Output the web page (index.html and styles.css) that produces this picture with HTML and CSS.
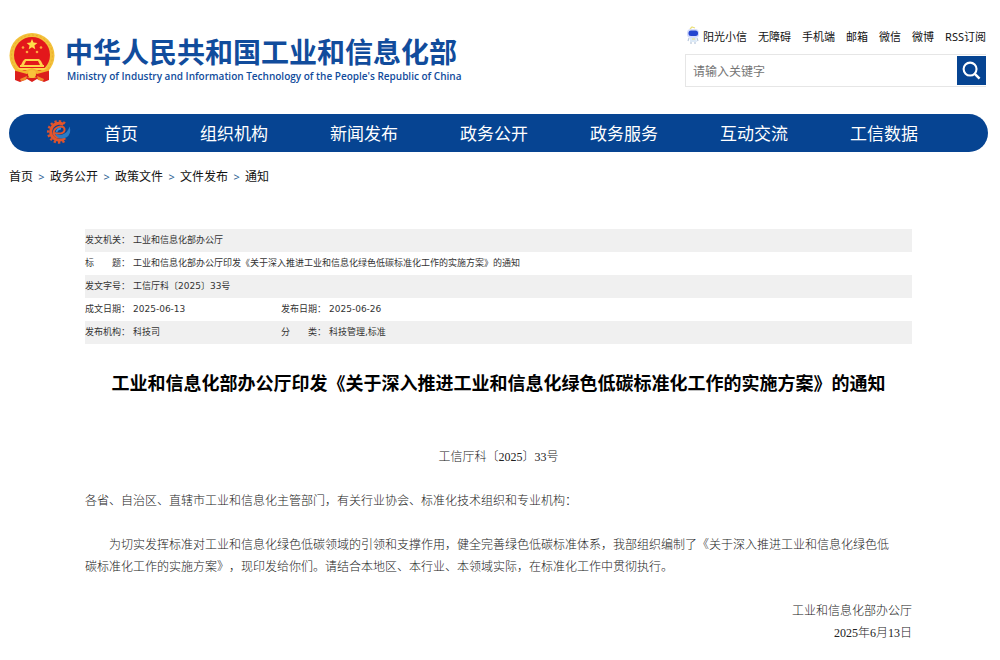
FILE: index.html
```html
<!DOCTYPE html>
<html lang="zh-CN">
<head>
<meta charset="utf-8">
<title>工业和信息化部办公厅通知</title>
<meta name="viewport" content="width=device-width, initial-scale=1">
<link rel="stylesheet" href="styles.css">
</head>
<body>
<header class="header">
  <a class="brand" href="#">
    <svg class="emblem" viewBox="0 0 46 50" aria-hidden="true">
      <path d="M6 34L40 34L40 47L35 49L28 46L23 49L18 46L11 49L6 47Z" fill="#dc1f1c"/>
      <circle cx="23" cy="22.500" r="22.500" fill="#f3c13a"/>
      <circle cx="23" cy="22.500" r="20.500" fill="none" stroke="#eba92c" stroke-width="1" stroke-dasharray="2 2"/>
      <circle cx="23" cy="22" r="18" fill="#e3171b"/>
      <path d="M23 6l1.500 3.600 3.900.3-3 2.500.9 3.800-3.300-2-3.300 2 .9-3.800-3-2.500 3.900-.3z" fill="#ffdf4a"/>
      <g fill="#ffa53e"><circle cx="14" cy="14.500" r="1.300"/><circle cx="32" cy="14.500" r="1.300"/><circle cx="18" cy="19" r="1.300"/><circle cx="28" cy="19" r="1.300"/></g>
      <path d="M16 26h14l2 2H14zM14 28h3l-2 4h-3zM29 28h3l2 4h-3zM11 32h24v2H11zM8 35h30l-3 2H11z" fill="#ffd34a"/>
      <path d="M4 33q8 6 14 4l5-2 5 2q6 2 14-4l-4 7-9 2-6-3-6 3-9-2z" fill="#f5b62c"/>
      <path d="M7 38l11 3 5-3 5 3 11-3v5l-10 2-6-2-6 2-10-2z" fill="#dc1f1c"/>
      <circle cx="23" cy="41" r="4" fill="#f9c33b"/>
      <path d="M11 46l7-3-1 4-5 1zM35 46l-7-3 1 4 5 1z" fill="#ef8a2a"/>
    </svg>
    <span class="brand-text">
      <span class="brand-cn">中华人民共和国工业和信息化部</span>
      <span class="brand-en" lang="en">Ministry of Industry and Information Technology of the People's Republic of China</span>
    </span>
  </a>
  <div class="tools">
    <nav class="quick" aria-label="快捷链接">
      <a class="robot-link" href="#">
        <svg class="robot" viewBox="0 0 14 20" aria-hidden="true">
          <path d="M4 3l2-2 3 1" fill="none" stroke="#eadf7c" stroke-width="1.200"/>
          <rect x="1" y="3" width="12" height="9" rx="4" fill="#d5dcfb"/>
          <rect x="2.500" y="4.500" width="9.500" height="5.500" rx="2.500" fill="#2344cf"/>
          <path d="M4 12h6l1 4H4z" fill="#dce9f6"/>
          <path d="M3 12l-1 3M11 12l1 3M5 16v2M9 16v2" stroke="#b9c8dc" stroke-width="1.200"/>
          <path d="M6 13h3" stroke="#eadf7c"/>
        </svg>阳光小信</a>
      <a href="#">无障碍</a>
      <a href="#">手机端</a>
      <a href="#">邮箱</a>
      <a href="#">微信</a>
      <a href="#">微博</a>
      <a href="#">RSS订阅</a>
    </nav>
    <form class="search">
      <input class="search-input" type="text" placeholder="请输入关键字" aria-label="请输入关键字">
      <button class="search-button" type="button" aria-label="搜索">
        <svg class="search-icon" viewBox="0 0 20 20" aria-hidden="true"><circle cx="8.500" cy="8.500" r="6.800" fill="none" stroke="#fff" stroke-width="2.200"/><path d="M13.500 13.500L18.500 18.500" stroke="#fff" stroke-width="2.600"/></svg>
      </button>
    </form>
  </div>
</header>

<nav class="main-nav" aria-label="主导航">
  <svg class="gear" viewBox="0 0 26 26" aria-hidden="true">
    <path d="M19 4.500A10.500 10.500 0 1 0 20 20.500" fill="none" stroke="#d9532f" stroke-width="2.600" stroke-dasharray="2.300 2"/>
    <path d="M17.500 5.500A8.500 8.500 0 1 0 19 19" fill="none" stroke="#e4552b" stroke-width="3"/>
    <path d="M8.500 14Q17 16 18.500 11.500Q19 7.500 14.500 7.500Q8 8.500 7.500 14Q9 20 17 18" fill="none" stroke="#e4552b" stroke-width="2"/>
    <path d="M10.500 14.500Q12 17 16.500 15.500Q22 13.500 23.500 7.500Q26.500 17 17 19.500Q10.500 19.500 9.500 15Z" fill="#2c7cc6"/>
    <path d="M10.500 13Q11.500 9.500 15 9.500" fill="none" stroke="#3a8bd4" stroke-width="1.800"/>
  </svg>
  <a href="#">首页</a>
  <a href="#">组织机构</a>
  <a href="#">新闻发布</a>
  <a href="#">政务公开</a>
  <a href="#">政务服务</a>
  <a href="#">互动交流</a>
  <a href="#">工信数据</a>
</nav>

<nav class="crumbs" aria-label="面包屑">
  <a href="#">首页</a><span class="sep">&gt;</span><a href="#">政务公开</a><span class="sep">&gt;</span><a href="#">政策文件</a><span class="sep">&gt;</span><a href="#">文件发布</a><span class="sep">&gt;</span><a href="#">通知</a>
</nav>

<main class="content">
  <table class="meta">
    <tr><th scope="row">发文机关：</th><td colspan="3">工业和信息化部办公厅</td></tr>
    <tr><th scope="row">标　　题：</th><td colspan="3">工业和信息化部办公厅印发《关于深入推进工业和信息化绿色低碳标准化工作的实施方案》的通知</td></tr>
    <tr><th scope="row">发文字号：</th><td colspan="3">工信厅科〔2025〕33号</td></tr>
    <tr><th scope="row">成文日期：</th><td class="first-value">2025-06-13</td><th scope="row">发布日期：</th><td>2025-06-26</td></tr>
    <tr><th scope="row">发布机构：</th><td class="first-value">科技司</td><th scope="row">分　　类：</th><td>科技管理,标准</td></tr>
  </table>
  <h1 class="title">工业和信息化部办公厅印发《关于深入推进工业和信息化绿色低碳标准化工作的实施方案》的通知</h1>
  <article class="article">
    <p class="number">工信厅科〔2025〕33号</p>
    <p>各省、自治区、直辖市工业和信息化主管部门，有关行业协会、标准化技术组织和专业机构：</p>
    <p class="indent">为切实发挥标准对工业和信息化绿色低碳领域的引领和支撑作用，健全完善绿色低碳标准体系，我部组织编制了《关于深入推进工业和信息化绿色低碳标准化工作的实施方案》，现印发给你们。请结合本地区、本行业、本领域实际，在标准化工作中贯彻执行。</p>
    <p class="sign">工业和信息化部办公厅<br>2025年6月13日</p>
  </article>
</main>
</body>
</html>
```

FILE: styles.css
```css
* {
  box-sizing: border-box;
}

body {
  margin: 0;
  padding: 26px 12px 16px 9px;
  background: #fff;
  color: #111;
  font-family: "Noto Sans", "Noto Sans CJK SC", sans-serif;
  font-size: 12px;
  text-spacing-trim: space-all;
}

a {
  color: inherit;
  text-decoration: none;
}

.header {
  display: flex;
  justify-content: space-between;
  align-items: flex-start;
}

.brand {
  display: flex;
  align-items: flex-start;
  gap: 10px;
  padding-top: 7px;
  color: #114c9c;
}

.emblem {
  width: 46px;
  height: 50px;
}

.brand-text {
  display: flex;
  flex-direction: column;
}

.brand-cn {
  font-family: "Noto Sans CJK SC", sans-serif;
  font-size: 28px;
  font-weight: 700;
  line-height: 36px;
}

.brand-en {
  padding-left: 2px;
  font-family: "Open Sans", sans-serif;
  font-size: 10px;
  font-weight: 600;
  line-height: 14px;
}

.tools {
  display: flex;
  flex-direction: column;
  gap: 8px;
  width: 303px;
  padding-right: 2px;
}

.quick {
  display: flex;
  justify-content: flex-end;
  align-items: center;
  gap: 11px;
  height: 20px;
  font-size: 11px;
  white-space: nowrap;
}

.robot-link {
  display: flex;
  align-items: center;
  gap: 3px;
}

.robot {
  width: 14px;
  height: 20px;
}

.search {
  display: flex;
  align-items: center;
  height: 33px;
  border: 1px solid #e6e6e6;
  border-right: 0;
}

.search-input {
  flex: 1;
  min-width: 0;
  height: 31px;
  padding: 2px 7px 0;
  border: 0;
  background: transparent;
  font: inherit;
}

.search-input::placeholder {
  color: #757575;
}

.search-button {
  display: flex;
  align-items: center;
  justify-content: center;
  width: 29px;
  height: 29px;
  padding: 0;
  border: 0;
  background: #064492;
}

.search-icon {
  width: 19px;
  height: 19px;
}

.main-nav {
  display: flex;
  align-items: center;
  gap: 62px;
  height: 38px;
  margin-top: 27px;
  padding: 0 0 2px 37px;
  border-radius: 19px;
  background: #064492;
  color: #fff;
  font-size: 17px;
  white-space: nowrap;
}

.gear {
  width: 26px;
  height: 26px;
  margin-right: -30px;
}

.crumbs {
  display: flex;
  margin-top: 16px;
  line-height: 18px;
}

.sep {
  width: 17px;
  color: #2c6293;
  font-size: 11px;
  text-align: center;
}

.content {
  padding: 43px 76px 0;
}

.meta {
  width: 100%;
  border-collapse: collapse;
  color: #333;
  font-family: "DejaVu Sans", "Noto Sans CJK SC", sans-serif;
  font-size: 9px;
  line-height: 23px;
}

.meta th,
.meta td {
  padding: 0;
  font-weight: 400;
  text-align: left;
}

.meta th {
  width: 48px;
}

.meta .first-value {
  width: 148px;
}

.meta tr:nth-child(odd) {
  background: #f0f0f0;
}

.title {
  margin: 24px 0 0;
  color: #000;
  font-size: 18px;
  font-weight: 700;
  line-height: 30px;
  text-align: center;
}

.article {
  margin-top: 48px;
  color: #222;
  font-family: "Liberation Serif", "Noto Sans CJK SC", serif;
  font-weight: 300;
  line-height: 22px;
}

.article p {
  margin: 0 0 22px;
}

.article .number {
  text-align: center;
}

.article .indent {
  max-width: 67em;
  text-indent: 2em;
}

.article .sign {
  margin-bottom: 0;
  text-align: right;
}
```
